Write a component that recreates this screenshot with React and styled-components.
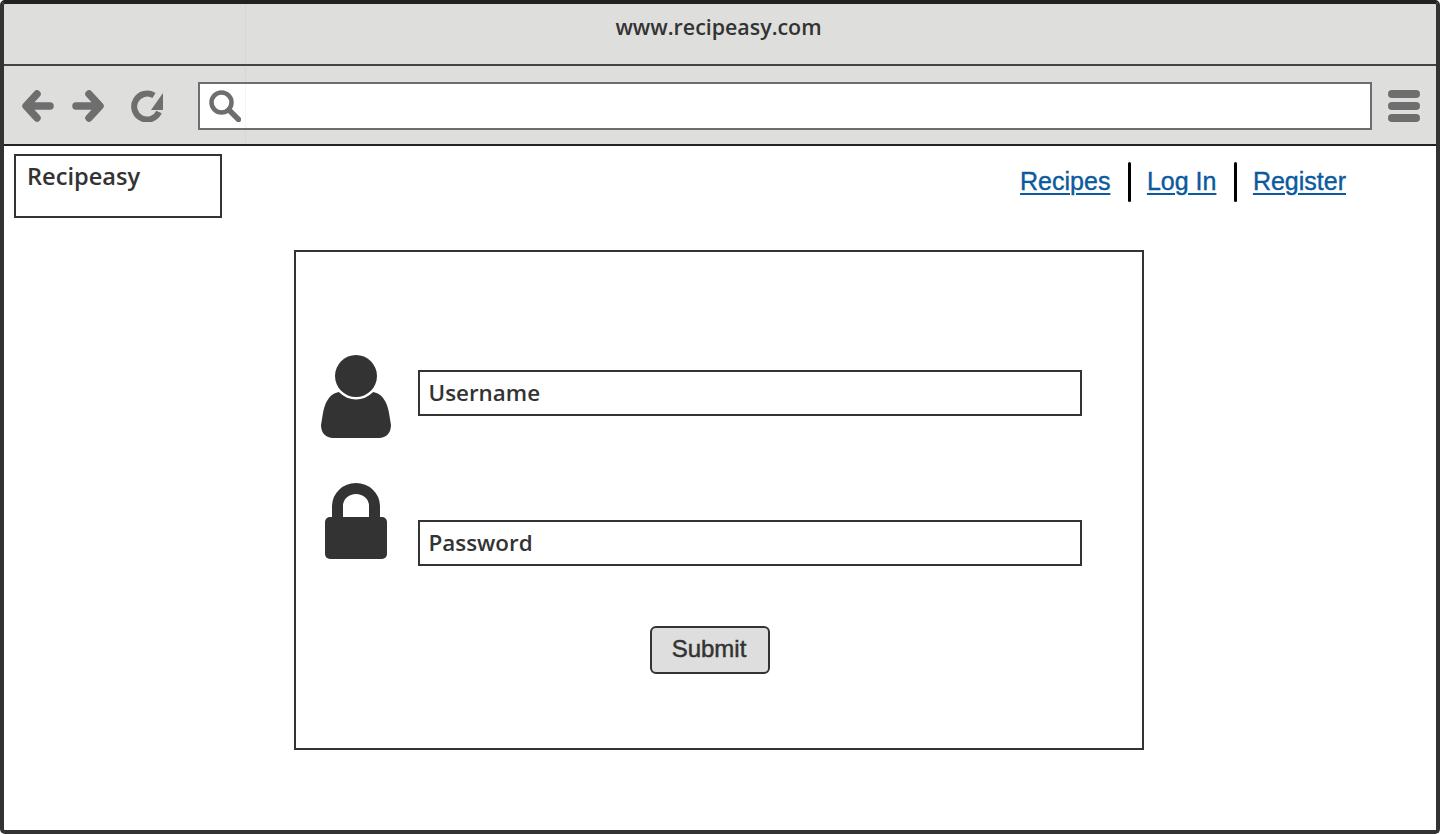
import React from 'react';
import styled, { createGlobalStyle } from 'styled-components';

const GlobalStyle = createGlobalStyle`
  html, body {
    margin: 0;
    padding: 0;
    background: #fff;
  }
  * {
    box-sizing: border-box;
  }
`;

const SANS = `"Open Sans", Lato, sans-serif`;

const BackIcon = () => (
  <svg width="32" height="32" viewBox="0 0 32 32" fill="none" stroke="#6e6e6e" strokeWidth="7.5" strokeLinecap="round" strokeLinejoin="round">
    <path d="M28 16H6M15 4 4 16l11 12" />
  </svg>
);

const ForwardIcon = () => (
  <svg width="32" height="32" viewBox="0 0 32 32" fill="none" stroke="#6e6e6e" strokeWidth="7.5" strokeLinecap="round" strokeLinejoin="round">
    <path d="M4 16h22M17 4l11 12-11 12" />
  </svg>
);

const ReloadIcon = () => (
  <svg width="32" height="32" viewBox="0 0 32 32">
    <path d="M28 22A13 13 0 1 1 23 5.5" fill="none" stroke="#6e6e6e" strokeWidth="6" />
    <path d="M32 3V20H20Z" fill="#6e6e6e" />
  </svg>
);

const SearchIcon = () => (
  <svg width="32" height="32" viewBox="0 0 32 32" fill="none" stroke="#6e6e6e" strokeLinecap="round">
    <circle cx="12.5" cy="12.5" r="10" strokeWidth="4.5" />
    <path d="M20 20 29.5 29.5" strokeWidth="5.5" />
  </svg>
);

const UserIcon = () => (
  <svg width="70" height="83" viewBox="0 0 70 83">
    <path d="M20 37C9 37 4 47 2 58L0 70C0 78 5 83 12 83H58C65 83 70 78 70 70L68 58C66 47 61 37 50 37Z" fill="#333" />
    <circle cx="35" cy="21" r="23.5" fill="#fff" />
    <circle cx="35" cy="21" r="21" fill="#333" />
  </svg>
);

const LockIcon = () => (
  <svg width="62" height="76" viewBox="0 0 62 76">
    <path d="M12.5 38V23A18.5 17.5 0 0 1 49.5 23V38" fill="none" stroke="#333" strokeWidth="11" />
    <rect x="0" y="34" width="62" height="42" rx="5" fill="#333" />
  </svg>
);

export default function App() {
  return (
    <>
      <GlobalStyle />
      <Frame>
        <Chrome>
          <TitleBar>www.recipeasy.com</TitleBar>
          <Toolbar>
            <NavIcons>
              <BackIcon />
              <ForwardIcon />
              <ReloadIcon />
            </NavIcons>
            <AddressBar>
              <SearchIcon />
            </AddressBar>
            <MenuIcon>
              <span />
              <span />
              <span />
            </MenuIcon>
          </Toolbar>
        </Chrome>
        <Header>
          <Logo>Recipeasy</Logo>
          <Nav>
            <NavLink href="#">Recipes</NavLink>
            <Separator />
            <NavLink href="#">Log In</NavLink>
            <Separator />
            <NavLink href="#">Register</NavLink>
          </Nav>
        </Header>
        <Card>
          <Row>
            <IconCell><UserIcon /></IconCell>
            <Field $offset={15}>Username</Field>
          </Row>
          <Row $gap={45}>
            <IconCell><LockIcon /></IconCell>
            <Field $offset={37}>Password</Field>
          </Row>
          <SubmitButton type="button">Submit</SubmitButton>
        </Card>
      </Frame>
    </>
  );
}

const Frame = styled.div`
  width: 1440px;
  height: 834px;
  border: 4px solid #333;
  border-top-color: #222;
  border-radius: 5px;
  font-family: ${SANS};
  color: #333;
  overflow: hidden;
`;

const Chrome = styled.div`
  position: relative;
  background: #dededc;
  border-bottom: 2px solid #222;
  box-shadow: -4px 0 0 #222, 4px 0 0 #222;

  &::after {
    content: '';
    position: absolute;
    top: -4px;
    bottom: -2px;
    left: 241px;
    width: 1px;
    background: rgba(128, 128, 128, 0.09);
  }
`;

const TitleBar = styled.div`
  height: 62px;
  padding-right: 3px;
  border-bottom: 2px solid #444;
  display: flex;
  align-items: flex-start;
  justify-content: center;
  font-size: 21.4px;
  font-weight: 600;
  line-height: 45px;
`;

const Toolbar = styled.div`
  height: 78px;
  display: flex;
  align-items: center;
  padding: 2px 16px 0 18px;
`;

const NavIcons = styled.div`
  display: flex;
  gap: 18px;
  margin-right: 35px;

  svg:last-child {
    margin-left: 9px;
  }
`;

const AddressBar = styled.div`
  flex: 1;
  height: 48px;
  background: #fff;
  border: 2px solid #6e6e6e;
  display: flex;
  align-items: center;
  padding-left: 9px;
  margin-right: 16px;
`;

const MenuIcon = styled.div`
  display: flex;
  flex-direction: column;
  gap: 4px;
  width: 32px;

  span {
    display: block;
    height: 8px;
    border-radius: 4px;
    background: #6e6e6e;
  }
`;

const Header = styled.header`
  display: flex;
  justify-content: space-between;
  padding: 8px 90px 0 10px;
`;

const Logo = styled.div`
  width: 208px;
  height: 64px;
  border: 2px solid #333;
  padding: 3px 0 0 11px;
  font-size: 23.6px;
  font-weight: 600;
  line-height: 35px;
`;

const Nav = styled.nav`
  display: flex;
  align-items: flex-start;
  padding-top: 8px;
`;

const NavLink = styled.a`
  font-family: "Liberation Sans", Arial, sans-serif;
  font-size: 25px;
  line-height: 38px;
  color: #0b5a9e;
  text-decoration: underline;
  text-decoration-thickness: 2px;
  text-underline-offset: 3px;
  -webkit-text-stroke: 0.4px #0b5a9e;
`;

const Separator = styled.span`
  width: 3px;
  height: 40px;
  margin: 0 16px 0 17.5px;
  background: #000;
  border-radius: 2px;
`;

const Card = styled.section`
  width: 850px;
  height: 500px;
  margin: 32px 0 0 290px;
  border: 2px solid #333;
  padding: 103px 0 0 22.5px;
`;

const Row = styled.div`
  display: flex;
  align-items: flex-start;
  margin-top: ${(p) => p.$gap || 0}px;
`;

const IconCell = styled.div`
  width: 74px;
  margin-right: 25.5px;
  display: flex;
  justify-content: center;
`;

const Field = styled.div`
  width: 664px;
  height: 46px;
  margin-top: ${(p) => p.$offset}px;
  border: 2px solid #333;
  padding-left: 8.5px;
  font-size: 22.4px;
  font-weight: 600;
  line-height: 41px;
`;

const SubmitButton = styled.button`
  display: block;
  width: 120px;
  height: 48px;
  margin: 60px 0 0 331.5px;
  background: #dedede;
  border: 2px solid #333;
  border-radius: 6px;
  color: #333;
  font-family: "Liberation Sans", Arial, sans-serif;
  font-size: 24px;
  line-height: 40px;
  -webkit-text-stroke: 0.5px #333;
  padding: 0 2px 3px 0;
`;
